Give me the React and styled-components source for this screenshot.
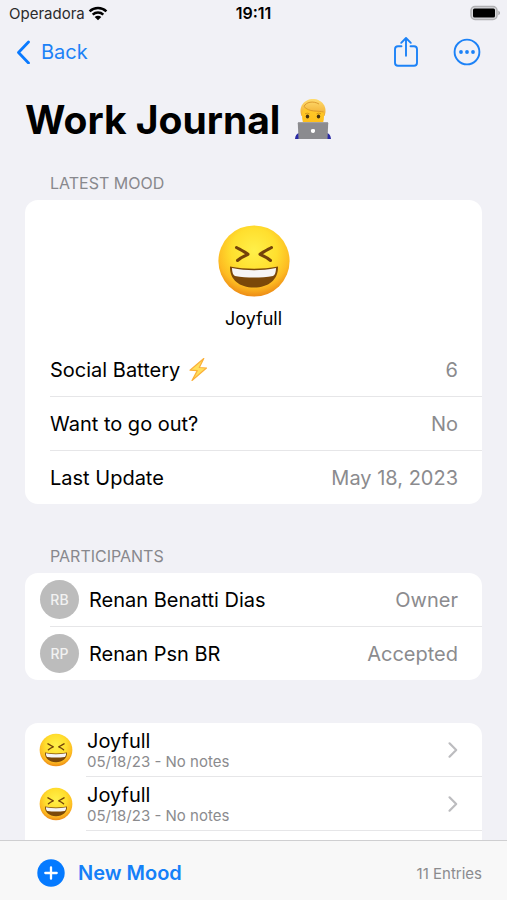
import React from 'react';
import styled, { createGlobalStyle } from 'styled-components';

const details = [
  { label: 'Social Battery', value: '6', bolt: true },
  { label: 'Want to go out?', value: 'No' },
  { label: 'Last Update', value: 'May 18, 2023' },
];

const participants = [
  { initials: 'RB', name: 'Renan Benatti Dias', status: 'Owner' },
  { initials: 'RP', name: 'Renan Psn BR', status: 'Accepted' },
];

const entries = [
  { id: 1, mood: 'Joyfull', note: '05/18/23 - No notes' },
  { id: 2, mood: 'Joyfull', note: '05/18/23 - No notes' },
];

function App() {
  return (
    <Screen>
      <GlobalStyle />
      <StatusBar>
        <Carrier>
          Operadora
          <WifiIcon />
        </Carrier>
        <Clock>19:11</Clock>
        <BatterySlot>
          <BatteryIcon />
        </BatterySlot>
      </StatusBar>
      <NavBar>
        <BackLink href="#journals">
          <BackIcon />
          Back
        </BackLink>
        <NavActions>
          <IconButton type="button" aria-label="Share">
            <ShareIcon />
          </IconButton>
          <IconButton type="button" aria-label="More">
            <MoreIcon />
          </IconButton>
        </NavActions>
      </NavBar>
      <Content>
        <Title>
          Work Journal
          <TechnologistIcon />
        </Title>

        <SectionTitle>LATEST MOOD</SectionTitle>
        <Card>
          <Hero>
            <LaughingIcon size={74} />
            <HeroLabel>Joyfull</HeroLabel>
          </Hero>
          <List>
            {details.map(({ label, value, bolt }) => (
              <Item key={label} $inset={25}>
                <Row $start={25}>
                  <Label>
                    {label}
                    {bolt && <BoltIcon />}
                  </Label>
                  <Value>{value}</Value>
                </Row>
              </Item>
            ))}
          </List>
        </Card>

        <SectionTitle $spaced>PARTICIPANTS</SectionTitle>
        <Card>
          <List>
            {participants.map(({ initials, name, status }) => (
              <Item key={initials} $inset={25}>
                <Row $start={15}>
                  <Avatar>{initials}</Avatar>
                  <Label>{name}</Label>
                  <Value>{status}</Value>
                </Row>
              </Item>
            ))}
          </List>
        </Card>

        <EntriesCard>
          <List>
            {entries.map(({ id, mood, note }) => (
              <EntryItem key={id} $inset={61}>
                <EntryLink href={`#entry-${id}`}>
                  <LaughingIcon size={34} />
                  <EntryText>
                    <EntryMood>{mood}</EntryMood>
                    <EntryNote>{note}</EntryNote>
                  </EntryText>
                  <DisclosureIcon />
                </EntryLink>
              </EntryItem>
            ))}
          </List>
        </EntriesCard>
      </Content>
      <Toolbar>
        <NewMoodButton type="button">
          <PlusIcon />
          New Mood
        </NewMoodButton>
        <EntryCount>11 Entries</EntryCount>
      </Toolbar>
    </Screen>
  );
}

const WifiIcon = () => (
  <svg width="20" height="15" viewBox="0 0 20 15" aria-hidden="true">
    <g fill="none" stroke="#000" strokeWidth="2.5">
      <path d="M1.6 5.4C6.3 .9 13.7 .9 18.4 5.4" />
      <path d="M4.7 8.7C7.7 5.9 12.3 5.9 15.3 8.7" />
    </g>
    <path d="M10 14.2L6.7 11C8.6 9.4 11.4 9.4 13.3 11Z" />
  </svg>
);

const BatteryIcon = () => (
  <svg width="31" height="16" viewBox="0 0 31 16" aria-hidden="true">
    <rect x="1" y="1.500" width="26" height="13" rx="4" fill="#d9d9dc" stroke="#b0b0b3" strokeWidth="1.5" />
    <rect x="3" y="3.500" width="22" height="9" rx="1.500" />
    <path d="M28.300 5.800C30.600 6.500 30.600 9.500 28.300 10.200Z" fill="#a6a6aa" />
  </svg>
);

const BackIcon = () => (
  <svg width="15" height="24" viewBox="0 0 15 24" aria-hidden="true">
    <path d="M13.500 2L3.500 12.500L13.500 23" fill="none" stroke="#0a7aff" strokeWidth="2.800" strokeLinecap="round" strokeLinejoin="round" />
  </svg>
);

const ShareIcon = () => (
  <svg width="26" height="32" viewBox="0 0 26 32" aria-hidden="true">
    <g fill="none" stroke="#1c82f7" strokeWidth="1.900" strokeLinecap="round" strokeLinejoin="round">
      <path d="M8.500 10.200H5A3 3 0 0 0 2 13.200V26.800A3 3 0 0 0 5 29.800H21A3 3 0 0 0 24 26.800V13.200A3 3 0 0 0 21 10.200H17.500" />
      <path d="M13 19.800V2.200M8.200 6.800L13 2L17.800 6.800" />
    </g>
  </svg>
);

const MoreIcon = () => (
  <svg width="28" height="28" viewBox="0 0 28 28" fill="#1c82f7" aria-hidden="true">
    <circle cx="14" cy="14" r="12.400" fill="none" stroke="#1c82f7" strokeWidth="1.900" />
    <circle cx="8" cy="14" r="1.900" />
    <circle cx="14" cy="14" r="1.900" />
    <circle cx="20" cy="14" r="1.900" />
  </svg>
);

const TechnologistIcon = () => (
  <svg width="38" height="42" viewBox="0 0 38 42" role="img" aria-label="Technologist">
    <defs>
      <linearGradient id="hair" x1="0" y1="0" x2="0" y2="1">
        <stop offset="0" stopColor="#ffdc70" />
        <stop offset="1" stopColor="#f0ab2c" />
      </linearGradient>
      <linearGradient id="skin" x1="0" y1="0" x2="0" y2="1">
        <stop offset="0" stopColor="#ffca2c" />
        <stop offset="1" stopColor="#fdb912" />
      </linearGradient>
    </defs>
    <path d="M1 41C1.300 37.500 2.500 35.500 5 35H33C35.500 35.500 36.700 37.500 37 41Z" fill="#2929a5" />
    <path d="M7.500 18C4 9 10 1 19 1C28 1 34 9 30.500 18Z" fill="url(#hair)" />
    <path d="M8 17C8 13 9.500 11.500 12 10C17 14 25 13 28.500 13.500C30 14 30 16 30 18C30 28 25 32 19 32C13 32 8 28 8 17Z" fill="url(#skin)" />
    <path d="M10 8.500C15 14.500 24 12.500 29.500 14M10 8.500C12 4 19 2.500 25 6" fill="none" stroke="#d8952a" strokeWidth=".9" />
    <ellipse cx="13.500" cy="18.500" rx="1.700" ry="2" fill="#43300f" />
    <ellipse cx="24.500" cy="18.500" rx="1.700" ry="2" fill="#43300f" />
    <path d="M11 15.800Q13.300 14.500 15.500 15.800M22.500 15.800Q24.700 14.500 27 15.800" fill="none" stroke="#c98d1b" strokeWidth=".8" />
    <path d="M5 24H33Q34.200 24 34.200 25.200L33.500 41H4.500L3.800 25.200Q3.800 24 5 24Z" fill="#8b8b8f" />
    <path d="M4 24.600H34" stroke="#a4a4a8" strokeWidth="1" />
    <path d="M19 31.200C20 30.600 21.500 31.300 21 33.300C20.600 35 19.600 35.200 19 34.800C18.300 35.200 17.200 34.800 16.900 33C16.700 31.300 18 30.600 19 31.200Z" fill="#fff" />
  </svg>
);

const BoltIcon = () => (
  <svg width="22" height="26" viewBox="0 0 22 26" role="img" aria-label="High voltage">
    <path d="M16.800 1.500L3 13.200L10.300 13.600L5 23.500L19.500 11L12.300 10.500Z" fill="#ffdf5c" stroke="#fbb03a" strokeWidth="1.200" strokeLinejoin="round" />
  </svg>
);

const LaughingIcon = ({ size }) => (
  <svg width={size} height={size} viewBox="0 0 74 74" role="img" aria-label="Laughing face">
    <defs>
      <radialGradient id={`face-${size}`} cx=".5" cy=".36" r=".64">
        <stop offset="0" stopColor="#fff04a" />
        <stop offset=".5" stopColor="#ffdf2e" />
        <stop offset=".8" stopColor="#fdbb22" />
        <stop offset="1" stopColor="#ed8b16" />
      </radialGradient>
    </defs>
    <circle cx="37" cy="37" r="35.600" fill={`url(#face-${size})`} />
    <g fill="none" stroke="#74430a" strokeWidth="3" strokeLinecap="round" strokeLinejoin="round">
      <path d="M19.500 23.500C23 25.500 28 28 31 30.300C27.500 31.800 24 33.500 20.500 36.500" />
      <path d="M54.500 23.500C51 25.500 46 28 43 30.300C46.500 31.800 50 33.500 53.500 36.500" />
    </g>
    <path d="M13 42.500C29 45.500 45 45.500 61 42.500C61.500 55 52 63.500 37 63.500C22 63.500 12.500 55 13 42.500Z" fill="#7b4809" />
    <path d="M15 44C30 47 44 47 59 44C59 48 58 51 56 52C44 54 30 54 18 52C16 51 15 48 15 44Z" fill="#f6f5f5" />
  </svg>
);

const DisclosureIcon = () => (
  <svg width="12" height="18" viewBox="0 0 12 18" aria-hidden="true">
    <path d="M2.500 2.300L9.200 9L2.500 15.700" fill="none" stroke="#bcbcbf" strokeWidth="2.200" strokeLinecap="round" strokeLinejoin="round" />
  </svg>
);

const PlusIcon = () => (
  <svg width="28" height="28" viewBox="0 0 28 28" aria-hidden="true">
    <circle cx="14" cy="14" r="13.700" fill="#057aff" />
    <path d="M14 8.300V19.700M8.300 14H19.700" stroke="#fff" strokeWidth="2.300" strokeLinecap="round" />
  </svg>
);

const GlobalStyle = createGlobalStyle`
  * {
    box-sizing: border-box;
  }

  body {
    margin: 0;
    background: #f1f1f6;
    color: #000;
    font-family: Inter, 'Liberation Sans', sans-serif;
  }

  button {
    padding: 0;
    border: 0;
    background: none;
    font-family: inherit;
    cursor: pointer;
  }

  a {
    color: inherit;
    text-decoration: none;
  }

  svg {
    display: block;
    flex: none;
  }
`;

const Screen = styled.div`
  display: flex;
  flex-direction: column;
  height: 100vh;
`;

const StatusBar = styled.header`
  display: grid;
  grid-template-columns: 1fr auto 1fr;
  align-items: center;
  height: 26px;
  padding: 0 6px;
  font-size: 15px;
`;

const Carrier = styled.span`
  display: flex;
  align-items: center;
  gap: 3px;
  padding-left: 3px;
  color: #2b2b2d;
`;

const Clock = styled.time`
  font-size: 16px;
  font-weight: 600;
`;

const BatterySlot = styled.span`
  justify-self: end;
`;

const NavBar = styled.nav`
  display: flex;
  align-items: center;
  justify-content: space-between;
  height: 52px;
  padding: 0 26px 0 15px;
`;

const BackLink = styled.a`
  display: flex;
  align-items: center;
  gap: 11px;
  color: #1c82f7;
  font-size: 20px;
`;

const NavActions = styled.div`
  display: flex;
  align-items: center;
  gap: 34px;
`;

const IconButton = styled.button`
  display: flex;
`;

const Content = styled.main`
  display: flex;
  flex: 1;
  flex-direction: column;
  min-height: 0;
  overflow-y: auto;
  padding: 0 25px;
  scrollbar-width: none;
`;

const Title = styled.h1`
  display: flex;
  flex: none;
  align-items: center;
  gap: 14px;
  height: 82px;
  margin: 0;
  font-size: 39px;
  font-weight: 700;
`;

const SectionTitle = styled.h2`
  margin: ${({ $spaced }) => ($spaced ? '40px' : '11px')} 0 5px;
  padding: 0 25px;
  color: #88888d;
  font-size: 16px;
  font-weight: 400;
  line-height: 24px;
`;

const Card = styled.section`
  flex: none;
  overflow: hidden;
  border-radius: 13px;
  background: #fff;
`;

// runs on underneath the toolbar
const EntriesCard = styled(Card)`
  flex: 1 0 auto;
  margin-top: 43px;
  border-radius: 13px 13px 0 0;
`;

const Hero = styled.div`
  display: flex;
  flex-direction: column;
  align-items: center;
  gap: 9px;
  padding: 24px 0 12px;
`;

const HeroLabel = styled.span`
  font-size: 18px;
  line-height: 24px;
`;

const List = styled.ul`
  margin: 0;
  padding: 0;
  list-style: none;
`;

const EntryItem = styled.li`
  &::after {
    content: '';
    display: block;
    height: 1px;
    margin-left: ${({ $inset }) => $inset}px;
    background: #e6e6e8;
  }
`;

const Item = styled(EntryItem)`
  &:last-child::after {
    display: none;
  }
`;

const Row = styled.div`
  display: flex;
  align-items: center;
  gap: 10px;
  height: 53px;
  padding: 0 24px 0 ${({ $start }) => $start}px;
  font-size: 20px;
`;

const Label = styled.span`
  display: flex;
  align-items: center;
  gap: 7px;
`;

const Value = styled.span`
  margin-left: auto;
  color: #8b8b8e;
`;

const Avatar = styled.span`
  display: flex;
  align-items: center;
  justify-content: center;
  width: 39px;
  height: 39px;
  border-radius: 50%;
  background: #bcbcbc;
  color: #f2f2f2;
  font-size: 14px;
  font-weight: 500;
`;

const EntryLink = styled.a`
  display: flex;
  align-items: center;
  gap: 14px;
  height: 53px;
  padding: 0 23px 0 14px;
`;

const EntryText = styled.span`
  display: flex;
  flex: 1;
  flex-direction: column;
`;

const EntryMood = styled.span`
  font-size: 20px;
  line-height: 24px;
`;

const EntryNote = styled.span`
  color: #8b8b8e;
  font-size: 15px;
  line-height: 18px;
`;

const Toolbar = styled.footer`
  display: flex;
  align-items: center;
  justify-content: space-between;
  height: 60px;
  padding: 5px 25px 0 37px;
  border-top: 1px solid #cfcfd1;
  background: #f8f8f8;
`;

const NewMoodButton = styled.button`
  display: flex;
  align-items: center;
  gap: 13px;
  color: #1580f8;
  font-size: 20px;
  font-weight: 600;
`;

const EntryCount = styled.span`
  color: #8b8b8e;
  font-size: 15px;
`;

export default App;
